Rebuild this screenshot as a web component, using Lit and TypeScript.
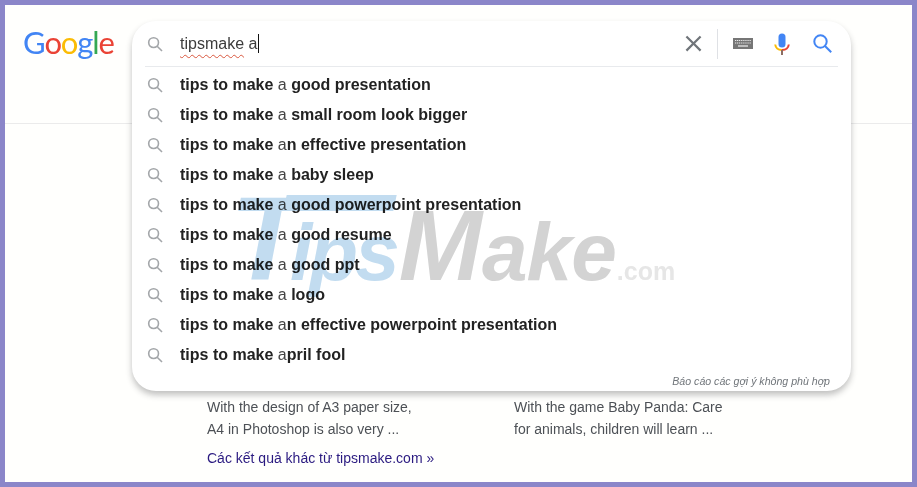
import { LitElement, css, html } from 'lit'
import { customElement } from 'lit/decorators.js'

// [typed prefix end, bold rest]
const suggestions: [string, string][] = [
  ['a', ' good presentation'],
  ['a', ' small room look bigger'],
  ['a', 'n effective presentation'],
  ['a', ' baby sleep'],
  ['a', ' good powerpoint presentation'],
  ['a', ' good resume'],
  ['a', ' good ppt'],
  ['a', ' logo'],
  ['a', 'n effective powerpoint presentation'],
  ['a', 'pril fool'],
]

@customElement('app-root')
export class AppRoot extends LitElement {
  static styles = css`
    :host {
      display: block;
      position: relative;
      width: 917px;
      height: 487px;
      box-sizing: border-box;
      border: 5px solid #8b86c9;
      background: #fffffd;
      font-family: 'Liberation Sans', Arial, sans-serif;
      overflow: hidden;
    }
    .head {
      height: 103px;
      border-bottom: 1px solid #ebebeb;
      padding: 15px 0 0 18px;
    }
    .logo {
      font-family: Lato, sans-serif;
      font-size: 31px;
      line-height: 44px;
      letter-spacing: -1.1px;
    }
    .results {
      display: grid;
      grid-template-columns: 307px 307px;
      padding: 272px 0 0 202px;
      font-size: 14px;
      line-height: 22px;
      color: #4d5156;
    }
    .more {
      margin: 7px 0 0 202px;
      font-size: 14px;
      line-height: 22px;
      color: #2a1a80;
    }
    .panel {
      position: absolute;
      left: 127px;
      top: 16px;
      width: 719px;
      height: 370px;
      border-radius: 24px;
      background: #fff;
      box-shadow: 0 4px 6px rgba(32, 33, 36, 0.28);
    }
    .bar {
      display: flex;
      align-items: center;
      height: 45px;
      margin: 0 13px;
      border-bottom: 1px solid #e8eaed;
    }
    .lens {
      flex: none;
      fill: none;
      stroke: #a3a6a9;
      stroke-width: 1.6;
    }
    .query {
      margin-left: 15px;
      font-size: 16px;
      color: #3c3c3c;
      flex: 1;
      display: flex;
      align-items: center;
    }
    .query u {
      text-decoration: underline wavy #d9573f 1px;
      text-underline-offset: 5px;
    }
    .caret {
      display: inline-block;
      width: 1px;
      height: 19px;
      margin-left: 1px;
      background: #111;
    }
    .close {
      fill: #70757a;
      margin-right: 10px;
    }
    .sep {
      width: 1px;
      height: 30px;
      background: #dfe1e5;
      margin-right: 15px;
    }
    .kbd {
      margin-right: 21px;
    }
    .mic {
      margin-right: 21px;
    }
    .go {
      fill: none;
      stroke: #4285f4;
      stroke-width: 2;
      margin-right: 3px;
    }
    .rows {
      margin: 3px 0 0;
      padding: 0;
      list-style: none;
    }
    .rows li {
      display: flex;
      align-items: center;
      height: 30px;
      padding-left: 13px;
      font-size: 16px;
      font-weight: bold;
      color: #222;
      white-space: pre;
    }
    .rows .lens {
      margin-right: 15px;
    }
    .rows span {
      font-weight: normal;
      color: #444;
    }
    .report {
      padding: 4px 21px 0 0;
      text-align: right;
      font-size: 10.6px;
      font-style: italic;
      line-height: 14px;
      color: #70757a;
    }
    .mark {
      position: absolute;
      left: 225px;
      top: 174px;
      display: flex;
      align-items: baseline;
      font-style: italic;
      font-weight: bold;
      line-height: 120px;
      mix-blend-mode: multiply;
      pointer-events: none;
      white-space: pre;
    }
    .mark .t {
      position: relative;
      font-size: 118px;
      color: #c2dcf0;
      margin-right: -12px;
    }
    /* long top bar of the logo's T, runs over the "ips" */
    .mark .t::after {
      content: '';
      position: absolute;
      left: 55px;
      top: 16px;
      width: 110px;
      height: 16px;
      background: #c2dcf0;
      transform: skewX(-12deg);
    }
    .mark .ips {
      font-size: 80px;
      color: #c2dcf0;
      letter-spacing: -3px;
      margin-right: 2px;
    }
    .mark .m {
      font-size: 100px;
      color: #d3d3d3;
    }
    .mark .ake {
      font-size: 82px;
      color: #d3d3d3;
      letter-spacing: -1px;
    }
    .mark .com {
      font-size: 25px;
      color: #e6e6e6;
      font-style: normal;
      margin-left: 1px;
    }
  `

  private lens() {
    return html`<svg class="lens" width="20" height="20" viewBox="0 0 20 20"><circle cx="8.6" cy="8.6" r="4.9"></circle><path d="M12.2 12.2l4.8 4.8"></path></svg>`
  }

  render() {
    return html`
      <div class="head">
        <div class="logo"><span style="color:#4285f4">G</span><span style="color:#ea4335">o</span><span style="color:#fbbc05">o</span><span style="color:#4285f4">g</span><span style="color:#34a853">l</span><span style="color:#ea4335">e</span></div>
      </div>
      <div class="results">
        <div>With the design of A3 paper size,<br />A4 in Photoshop is also very ...</div>
        <div>With the game Baby Panda: Care<br />for animals, children will learn ...</div>
      </div>
      <div class="more">Các kết quả khác từ tipsmake.com »</div>

      <div class="panel">
        <div class="bar">
          ${this.lens()}
          <div class="query"><u>tipsmake</u>&nbsp;a<i class="caret"></i></div>
          <svg class="close" width="27" height="27" viewBox="0 0 24 24"><path d="M19 6.41L17.59 5 12 10.59 6.41 5 5 6.41 10.59 12 5 17.59 6.41 19 12 13.41 17.59 19 19 17.59 13.41 12z"></path></svg>
          <div class="sep"></div>
          <svg class="kbd" width="20" height="11" viewBox="0 0 20 11">
            <rect width="20" height="11" fill="#767676"></rect>
            <path d="M2 2.5h16M2 5h16" stroke="#e8e8e8" stroke-width="1.2" stroke-dasharray="1.2 .7" fill="none"></path>
            <path d="M5 8h10" stroke="#e8e8e8" stroke-width="1.3"></path>
          </svg>
          <svg class="mic" width="16" height="22" viewBox="0 0 16 22">
            <rect x="4.5" y="0.5" width="7" height="14" rx="3.5" fill="#4285f4"></rect>
            <path d="M1.2 11.5c.4 3.2 3 5.4 6.8 5.4" stroke="#fbbc05" stroke-width="2" fill="none"></path>
            <path d="M14.8 11.5c-.4 3.2-3 5.4-6.8 5.4" stroke="#ea4335" stroke-width="2" fill="none"></path>
            <path d="M8 17v5" stroke="#8d6e63" stroke-width="2"></path>
          </svg>
          <svg class="go" width="24" height="24" viewBox="0 0 24 24"><circle cx="9.5" cy="9.5" r="6.2"></circle><path d="M14 14l6.2 6.2"></path></svg>
        </div>
        <ul class="rows">
          ${suggestions.map(
            ([typed, rest]) => html`<li>${this.lens()}tips to make <span>${typed}</span>${rest}</li>`,
          )}
        </ul>
        <div class="report">Báo cáo các gợi ý không phù hợp</div>
      </div>

      <div class="mark"><span class="t">T</span><span class="ips">ips</span><span class="m">M</span><span class="ake">ake</span><span class="com">.com</span></div>
    `
  }
}

declare global {
  interface HTMLElementTagNameMap {
    'app-root': AppRoot
  }
}
